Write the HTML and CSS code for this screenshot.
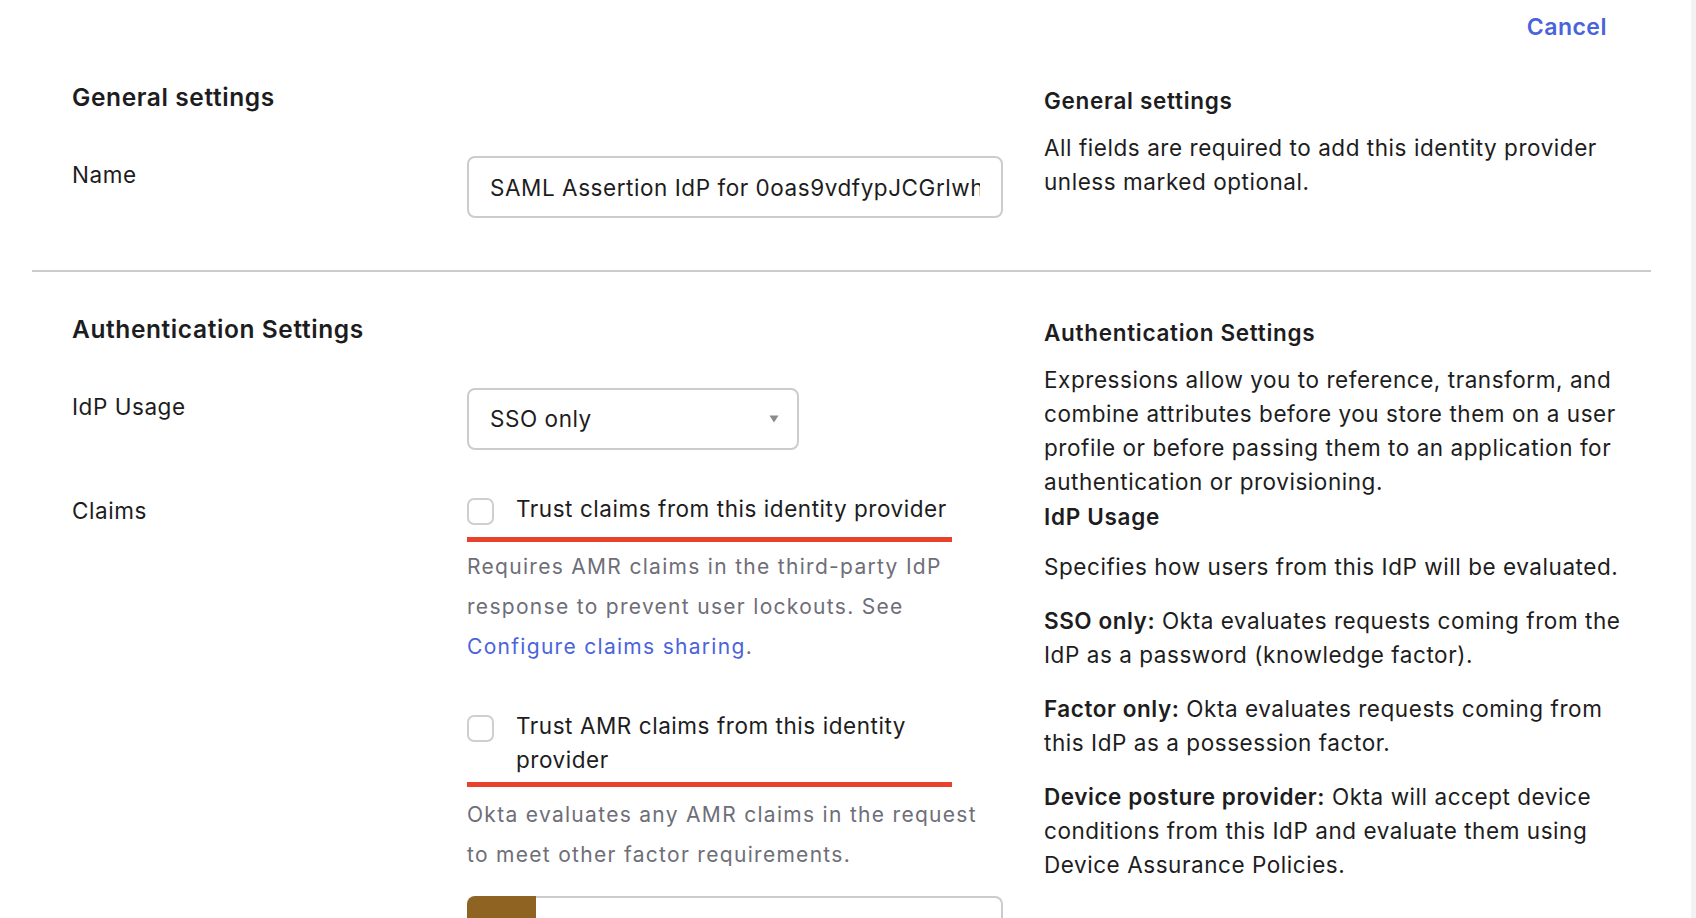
FILE: index.html
```html
<!DOCTYPE html>
<html lang="en">
<head>
<meta charset="utf-8">
<title>Identity provider – settings</title>
<link rel="stylesheet" href="styles.css">
</head>
<body>
<div class="page">
  <main class="content">
    <div class="topbar"><a class="cancel" href="#">Cancel</a></div>

    <section class="section section-general">
      <div class="form-area">
        <h2 class="section-title">General settings</h2>
        <div class="form-row">
          <label class="field-label" for="idp-name">Name</label>
          <div class="field">
            <input id="idp-name" class="text-input" type="text" value="SAML Assertion IdP for 0oas9vdfypJCGrlwh5d7">
          </div>
        </div>
      </div>
      <aside class="help">
        <h3 class="help-title">General settings</h3>
        <p class="help-text">All fields are required to add this identity provider unless marked optional.</p>
      </aside>
    </section>

    <section class="section section-auth">
      <div class="form-area">
        <h2 class="section-title">Authentication Settings</h2>
        <div class="form-row">
          <span class="field-label">IdP Usage</span>
          <div class="field">
            <div class="select" role="combobox" aria-expanded="false">
              <span>SSO only</span>
              <svg class="select-arrow" width="10" height="8" viewBox="0 0 10 8" aria-hidden="true"><path d="M0.5 0.5 H9.5 L5 7.5 Z" fill="#8a8a8f"/></svg>
            </div>
          </div>
        </div>
        <div class="form-row">
          <span class="field-label">Claims</span>
          <div class="field">
            <label class="check-row">
              <span class="checkbox"></span>
              <span class="check-label">Trust claims from this identity provider</span>
            </label>
            <p class="hint">Requires AMR claims in the third-party IdP response to prevent user lockouts. See <a class="link" href="#">Configure claims sharing</a>.</p>

            <label class="check-row check-row-spaced">
              <span class="checkbox"></span>
              <span class="check-label">Trust AMR claims from this identity provider</span>
            </label>
            <p class="hint hint-spaced">Okta evaluates any AMR claims in the request to meet other factor requirements.</p>

            <div class="split-field">
              <span class="swatch"></span>
              <span class="split-input"></span>
            </div>
          </div>
        </div>
      </div>
      <aside class="help">
        <h3 class="help-title">Authentication Settings</h3>
        <p class="help-text">Expressions allow you to reference, transform, and combine attributes before you store them on a user profile or before passing them to an application for authentication or provisioning.</p>
        <h3 class="help-title help-subtitle">IdP Usage</h3>
        <p class="help-text">Specifies how users from this IdP will be evaluated.</p>
        <p class="help-text help-para"><strong>SSO only:</strong> Okta evaluates requests coming from the IdP as a password (knowledge factor).</p>
        <p class="help-text help-para"><strong>Factor only:</strong> Okta evaluates requests coming from this IdP as a possession factor.</p>
        <p class="help-text help-para"><strong>Device posture provider:</strong> Okta will accept device conditions from this IdP and evaluate them using Device Assurance Policies.</p>
      </aside>
    </section>
  </main>
  <div class="scroll-track"></div>
</div>
</body>
</html>
```

FILE: styles.css
```css
html, body {
  margin: 0;
  padding: 0;
  height: 100%;
  overflow: hidden;
  background: #ffffff;
}

body {
  font-family: "Inter", "Noto Sans", "Liberation Sans", sans-serif;
  font-size: 22.5px;
  line-height: 34px;
  letter-spacing: 0.55px;
  color: #1d1d21;
}

.page {
  display: flex;
  justify-content: space-between;
  height: 100vh;
}

.content {
  margin-left: 32px;
  width: 1619px;
  flex: none;
}

.scroll-track {
  width: 5px;
  flex: none;
  background: #f2f2f2;
}

/* top bar */
.topbar {
  display: flex;
  justify-content: flex-end;
  padding: 10px 44px 0 0;
}

.cancel {
  font-size: 23px;
  line-height: 34px;
  font-weight: 600;
  letter-spacing: 0.5px;
  color: #4a63dd;
  text-decoration: none;
}

/* sections */
.section {
  display: grid;
  grid-template-columns: 931px 1fr;
  padding-left: 40px;
}

.section-general {
  padding-top: 36px;
  padding-bottom: 52px;
  border-bottom: 2px solid #cbcbcb;
}

.section-auth {
  padding-top: 40px;
}

.section-title {
  margin: 0;
  font-size: 24.5px;
  line-height: 34px;
  font-weight: 600;
  letter-spacing: 0.6px;
}

.form-row {
  display: grid;
  grid-template-columns: 395px 536px;
  margin-top: 42px;
}

.field-label {
  padding-top: 2px;
}

/* inputs */
.text-input {
  display: block;
  box-sizing: border-box;
  width: 536px;
  height: 62px;
  margin: 0;
  padding: 0 21px;
  border: 2px solid #cccccc;
  border-radius: 8px;
  font: inherit;
  letter-spacing: inherit;
  color: #1d1d21;
  background: #ffffff;
  outline: none;
}

.select {
  box-sizing: border-box;
  width: 332px;
  height: 62px;
  padding: 0 18px 0 21px;
  border: 2px solid #cccccc;
  border-radius: 8px;
  display: flex;
  align-items: center;
  justify-content: space-between;
}

.select-arrow {
  display: block;
}

/* checkboxes */
.check-row {
  display: flex;
  align-items: flex-start;
  gap: 22px;
  width: 485px;
  padding-bottom: 8px;
  border-bottom: 5px solid #e8412c;
  cursor: pointer;
}

.check-row-spaced {
  margin-top: 42px;
  padding-bottom: 5px;
}

.checkbox {
  flex: none;
  box-sizing: border-box;
  width: 27px;
  height: 27px;
  margin: 6px 0 4px;
  border: 2px solid #cfcfcf;
  border-radius: 7px;
  background: #ffffff;
}

.hint {
  margin: 5px 0 0;
  font-size: 21px;
  line-height: 40px;
  letter-spacing: 1.3px;
  color: #6e6e78;
}

.hint-spaced {
  margin-top: 8px;
}

.link {
  color: #4a63dd;
  text-decoration: none;
}

/* split field at the bottom */
.split-field {
  display: flex;
  width: 536px;
  height: 62px;
  margin-top: 21px;
}

.swatch {
  flex: none;
  width: 69px;
  background: #8f6423;
  border-radius: 8px 0 0 8px;
}

.split-input {
  flex: 1;
  box-sizing: border-box;
  border: 2px solid #cccccc;
  border-left: none;
  border-radius: 0 8px 8px 0;
}

/* help column */
.help {
  padding: 4px 11px 0 41px;
}

.help-title {
  margin: 0 0 13px;
  font-size: 22.5px;
  line-height: 34px;
  font-weight: 600;
  letter-spacing: 0.7px;
}

.help-text {
  margin: 0;
}

.help-subtitle {
  margin-top: 1px;
  margin-bottom: 16px;
}

.help-para {
  margin-top: 20px;
}

.help-text strong {
  font-weight: 600;
}
```
